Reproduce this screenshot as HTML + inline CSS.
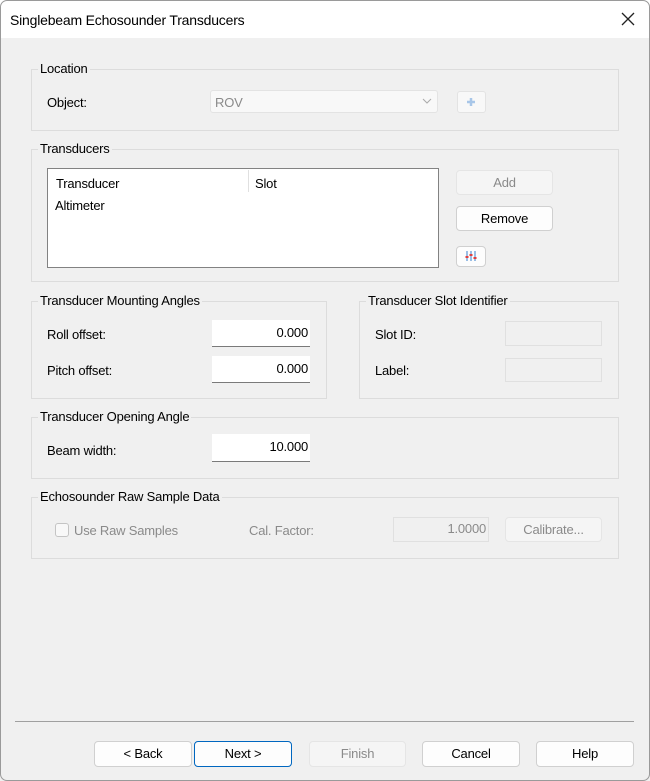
<!DOCTYPE html>
<html><head><style>
*{box-sizing:border-box;margin:0;padding:0}
body{width:650px;height:781px;background:#f0f0f0;font-family:"Liberation Sans",sans-serif;font-size:13px;color:#000;position:relative;overflow:hidden;letter-spacing:-0.2px}
.frame{position:absolute;left:0;top:0;width:650px;height:781px;border:1px solid #9a9a9a;border-radius:7px;z-index:5;pointer-events:none}
.title{position:absolute;left:0;top:0;width:650px;height:38px;background:#fff}
.a{position:absolute;white-space:nowrap}
.g{position:absolute;border:1px solid #dcdcdc}
.gl{position:absolute;background:#f0f0f0;padding:0 2px;line-height:14px}
.inp{position:absolute;background:#fff;border-bottom:1px solid #7a7a7a;text-align:right;padding:5px 2px 0 0}
.dis{position:absolute;background:#f0f0f0;border:1px solid #e0e0e0}
.btn{position:absolute;background:#fdfdfd;border:1px solid #d0d0d0;border-radius:4px;text-align:center;line-height:24px}
.btnd{position:absolute;background:#f5f5f5;border:1px solid #e5e5e5;border-radius:4px;text-align:center;line-height:24px;color:#8a8a8a}
.gray{color:#8a8a8a}
</style></head><body>
<div class="frame"></div>
<div class="title"></div>
<div class="a" style="left:10px;top:12px;font-size:14px">Singlebeam Echosounder Transducers</div>
<svg class="a" style="left:620px;top:11px" width="16" height="16"><path d="M2 2L14 14M14 2L2 14" stroke="#222" stroke-width="1.3"/></svg>

<div class="g" style="left:31px;top:69px;width:588px;height:62px"></div>
<div class="gl" style="left:38px;top:62px">Location</div>
<div class="a" style="left:47px;top:95px">Object:</div>
<div class="a" style="left:210px;top:90px;width:228px;height:23px;background:#f8f8f8;border:1px solid #e3e3e3;border-radius:3px;color:#8a8a8a;padding:4px 0 0 4px">ROV</div>
<svg class="a" style="left:422px;top:97px" width="10" height="8"><path d="M1 2L5 6L9 2" stroke="#aaa" fill="none"/></svg>
<div class="a" style="left:457px;top:91px;width:29px;height:22px;background:#f8f8f8;border:1px solid #e3e3e3;border-radius:3px"></div>
<svg class="a" style="left:466px;top:97px" width="10" height="10"><path d="M5 1V9M1 5H9" stroke="#a8c6e8" stroke-width="2.5"/></svg>

<div class="g" style="left:31px;top:149px;width:588px;height:133px"></div>
<div class="gl" style="left:38px;top:142px">Transducers</div>
<div class="a" style="left:47px;top:168px;width:392px;height:100px;background:#fff;border:1px solid #828282"></div>
<div class="a" style="left:56px;top:176px">Transducer</div>
<div class="a" style="left:248px;top:170px;width:1px;height:22px;background:#e0e0e0"></div>
<div class="a" style="left:255px;top:176px">Slot</div>
<div class="a" style="left:55px;top:198px">Altimeter</div>
<div class="btnd" style="left:456px;top:170px;width:97px;height:25px">Add</div>
<div class="btn" style="left:456px;top:206px;width:97px;height:25px">Remove</div>
<div class="btn" style="left:456px;top:246px;width:30px;height:21px"></div>
<svg class="a" style="left:464px;top:249px" width="14" height="14"><path d="M3 2V12M7 2V12M11 2V12" stroke="#7aa9dd" stroke-width="1.5"/><path d="M1.5 8H4.5M5.5 6H8.5M9.5 9H12.5" stroke="#e04040" stroke-width="2"/></svg>

<div class="g" style="left:31px;top:301px;width:296px;height:98px"></div>
<div class="gl" style="left:38px;top:294px">Transducer Mounting Angles</div>
<div class="a" style="left:47px;top:327px">Roll offset:</div>
<div class="inp" style="left:212px;top:320px;width:98px;height:27px">0.000</div>
<div class="a" style="left:47px;top:363px">Pitch offset:</div>
<div class="inp" style="left:212px;top:356px;width:98px;height:27px">0.000</div>

<div class="g" style="left:359px;top:301px;width:260px;height:98px"></div>
<div class="gl" style="left:366px;top:294px">Transducer Slot Identifier</div>
<div class="a" style="left:375px;top:327px">Slot ID:</div>
<div class="dis" style="left:505px;top:321px;width:97px;height:25px"></div>
<div class="a" style="left:375px;top:363px">Label:</div>
<div class="dis" style="left:505px;top:358px;width:97px;height:24px"></div>

<div class="g" style="left:31px;top:417px;width:588px;height:62px"></div>
<div class="gl" style="left:38px;top:410px">Transducer Opening Angle</div>
<div class="a" style="left:47px;top:443px">Beam width:</div>
<div class="inp" style="left:212px;top:434px;width:98px;height:28px">10.000</div>

<div class="g" style="left:31px;top:497px;width:588px;height:62px"></div>
<div class="gl" style="left:38px;top:490px">Echosounder Raw Sample Data</div>
<div class="a" style="left:55px;top:523px;width:14px;height:14px;border:1px solid #c4c4c4;border-radius:3px;background:#f8f8f8"></div>
<div class="a gray" style="left:74px;top:523px">Use Raw Samples</div>
<div class="a gray" style="left:249px;top:523px">Cal. Factor:</div>
<div class="dis" style="left:393px;top:517px;width:96px;height:25px;text-align:right;padding:3px 2px 0 0;color:#8a8a8a">1.0000</div>
<div class="btnd" style="left:505px;top:517px;width:97px;height:25px">Calibrate...</div>

<div class="a" style="left:15px;top:721px;width:619px;height:1px;background:#a0a0a0"></div>
<div class="btn" style="left:94px;top:741px;width:98px;height:26px">&lt; Back</div>
<div class="btn" style="left:194px;top:741px;width:98px;height:26px;border-color:#0067c0">Next &gt;</div>
<div class="btnd" style="left:309px;top:741px;width:97px;height:26px">Finish</div>
<div class="btn" style="left:422px;top:741px;width:98px;height:26px">Cancel</div>
<div class="btn" style="left:536px;top:741px;width:98px;height:26px">Help</div>
</body></html>
